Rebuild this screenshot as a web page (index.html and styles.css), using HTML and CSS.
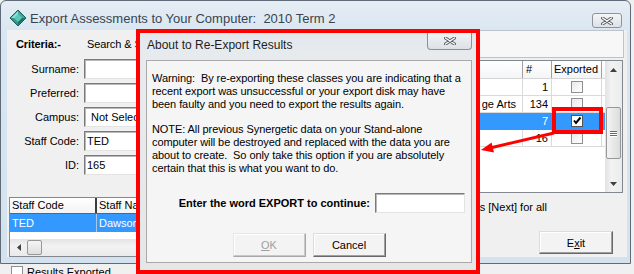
FILE: index.html
```html
<!DOCTYPE html>
<html>
<head>
<meta charset="utf-8">
<title>Export Assessments</title>
<link rel="stylesheet" href="styles.css">
</head>
<body>
<div class="desk">
  <div class="mainwin">
    <div class="titlebar">
      <svg class="appicon" width="16" height="16" viewBox="0 0 16 16">
        <polygon points="8,0 16,8 8,16 0,8" fill="#2b8e83" stroke="#1c5e57" stroke-width="1"/>
        <polygon points="8,1 8,8 1,8" fill="#8fe0d2"/>
        <polygon points="8,1 15,8 8,8" fill="#3fb0a0"/>
        <polygon points="1,8 8,8 8,15" fill="#2f9a8c"/>
        <polygon points="15,8 8,8 8,15" fill="#1d6f66"/>
        <polygon points="8,4 12,8 8,12 4,8" fill="#5cc8b7"/>
      </svg>
      <span class="wtitle">Export Assessments to Your Computer:&nbsp; 2010 Term 2</span>
      <div class="wclose">
        <svg width="12" height="8" viewBox="0 0 12 8"><path d="M1.5 1 L10.5 7 M10.5 1 L1.5 7" stroke="#5a5f66" stroke-width="3.2" stroke-linecap="round"/><path d="M1.5 1 L10.5 7 M10.5 1 L1.5 7" stroke="#ffffff" stroke-width="1.4" stroke-linecap="round"/></svg>
      </div>
    </div>
    <div class="client">
      <div class="leftcol">
        <div class="critrow"><b class="crit">Criteria:-</b><span>Search &amp; S</span></div>
        <div class="form">
          <label>Surname:</label><div class="tb"></div>
          <label>Preferred:</label><div class="tb"></div>
          <label>Campus:</label><div class="tb combo">Not Selec</div>
          <label>Staff Code:</label><div class="tb">TED</div>
          <label>ID:</label><div class="tb">165</div>
        </div>
        <div class="lgrid">
          <div class="lhead"><div class="lh c1">Staff Code</div><div class="lh c2">Staff Na</div></div>
          <div class="lrow sel"><div class="lc c1">TED</div><div class="lc c2">Dawson</div></div>
          <div class="lfill"></div>
          <div class="hscroll">
            <div class="harrow"><svg width="4" height="7" viewBox="0 0 4 7"><polygon points="4,0 0,3.5 4,7" fill="#404040"/></svg></div>
            <div class="hthumb"></div>
          </div>
        </div>
      </div>
      <div class="rightcol">
        <div class="toppanel"></div>
        <div class="rgrid">
          <div class="rtable">
            <div class="rrow rhead"><div></div><div></div><div>#</div><div>Exported</div><div></div></div>
            <div class="rrow"><div></div><div></div><div class="num">1</div><div class="chk"><span class="cbx"></span></div><div></div></div>
            <div class="rrow"><div></div><div class="desc">ge Arts</div><div class="num">134</div><div class="chk"><span class="cbx"></span></div><div></div></div>
            <div class="rrow sel"><div></div><div></div><div class="num">7</div><div class="chk"><span class="cbx on"><svg width="10" height="10" viewBox="0 0 10 10"><path d="M2 4.5 L4 7 L8.5 1.5" stroke="#000" stroke-width="2" fill="none"/></svg></span></div><div></div></div>
            <div class="rrow"><div></div><div></div><div class="num">16</div><div class="chk"><span class="cbx"></span></div><div></div></div>
          </div>
          <div class="vscroll">
            <div class="varrow"><svg width="7" height="4" viewBox="0 0 7 4"><polygon points="0,4 3.5,0 7,4" fill="#404040"/></svg></div>
            <div class="vtrack"><div class="vthumb"><span></span><span></span><span></span></div></div>
            <div class="varrow"><svg width="7" height="4" viewBox="0 0 7 4"><polygon points="0,0 3.5,4 7,0" fill="#404040"/></svg></div>
          </div>
        </div>
        <div class="hint">s [Next] for all</div>
        <div class="btnrow"><div class="btn exit">E<u>x</u>it</div></div>
      </div>
    </div>
  </div>
  <div class="belowrow"><span class="cb"></span>Results Exported</div>

  <div class="redframe">
    <div class="dialog">
      <div class="dtitlebar">
        <span class="dtitle">About to Re-Export Results</span>
        <div class="dclose">
          <svg width="12" height="8" viewBox="0 0 12 8"><path d="M1.5 1 L10.5 7 M10.5 1 L1.5 7" stroke="#5a5f66" stroke-width="3.2" stroke-linecap="round"/><path d="M1.5 1 L10.5 7 M10.5 1 L1.5 7" stroke="#ffffff" stroke-width="1.4" stroke-linecap="round"/></svg>
        </div>
      </div>
      <div class="panel">
        <p>Warning:&nbsp; By re-exporting these classes you are indicating that a<br>recent export was unsuccessful or your export disk may have<br>been faulty and you need to export the results again.</p>
        <p>NOTE: All previous Synergetic data on your Stand-alone<br>computer will be destroyed and replaced with the data you are<br>about to create.&nbsp; So only take this option if you are absolutely<br>certain that this is what you want to do.</p>
        <div class="enterrow"><b>Enter the word EXPORT to continue:</b><div class="tb wide"></div></div>
        <div class="dbtns"><div class="btn dis"><u>O</u>K</div><div class="btn">Cancel</div></div>
      </div>
    </div>
  </div>

  <svg class="annot" width="634" height="274" viewBox="0 0 634 274">
    <rect x="554" y="109" width="47" height="23" fill="none" stroke="#ff0000" stroke-width="4"/>
    <line x1="554" y1="133" x2="490" y2="148" stroke="#ff0000" stroke-width="3"/>
    <polygon points="481,150 491.6,142.5 494,152.5" fill="#ff0000"/>
  </svg>
</div>
</body>
</html>
```

FILE: styles.css
```css
* { box-sizing: border-box; }
html, body { margin: 0; padding: 0; }
body {
  width: 634px;
  height: 274px;
  overflow: hidden;
  background: #f0f0f0;
  font-family: "Liberation Sans", Arial, sans-serif;
  font-size: 11px;
  color: #000;
}
.desk { position: relative; width: 634px; height: 274px; }

/* main window */
.mainwin {
  width: 631px;
  height: 264px;
  border: 1px solid #5f6b78;
  border-radius: 6px 6px 0 0;
  background: linear-gradient(180deg, #e6edf4 0, #d9e6f1 30px, #d3e2ee 100%);
  padding: 0 3px 6px 6px;
  display: flex;
  flex-direction: column;
}
.titlebar { height: 29px; flex: none; display: flex; align-items: flex-start; }
.appicon { margin: 9px 0 0 3px; flex: none; }
.wtitle { margin: 10px 0 0 4px; font-size: 13px; line-height: 15px; color: #3a4450; white-space: nowrap; }
.wclose {
  margin: 12px 5px 0 auto;
  width: 30px; height: 15px;
  border: 1px solid #8d949c;
  border-radius: 3px;
  background: linear-gradient(180deg, #f3f5f7, #dde2e7);
  display: flex; align-items: center; justify-content: center;
}

.client { height: 227px; flex: none; background: #f0f0f0; display: flex; }
.leftcol { width: 283px; flex: none; padding-left: 2px; display: flex; flex-direction: column; }
.critrow { height: 28px; flex: none; display: flex; align-items: center; padding-left: 7px; white-space: nowrap; letter-spacing: -0.1px; }
.crit { width: 71px; flex: none; }

.form {
  margin-top: 1px;
  display: grid;
  grid-template-columns: 70px 200px;
  grid-auto-rows: 20px;
  column-gap: 5px;
  row-gap: 4px;
}
.form label { text-align: right; line-height: 20px; white-space: nowrap; }
.tb {
  height: 20px;
  background: #fff;
  border: 1px solid;
  border-color: #7a7a7a #e3e3e3 #e3e3e3 #7a7a7a;
  box-shadow: inset 1px 1px 0 #b8b8b8;
  padding-left: 2px;
  line-height: 18px;
  white-space: nowrap;
  overflow: hidden;
}
.tb.combo { padding-left: 6px; }

.lgrid {
  margin-top: 22px;
  width: 281px;
  height: 60px;
  border: 1px solid #828790;
  background: #fff;
  display: flex;
  flex-direction: column;
}
.lhead { height: 16px; flex: none; display: flex; border-bottom: 1px solid #646464; background: linear-gradient(#ffffff, #f3f3f3); }
.lh { line-height: 15px; padding-left: 2px; white-space: nowrap; }
.lh.c1 { width: 87px; border-right: 2px solid #3c3c3c; }
.lrow { height: 18px; flex: none; display: flex; }
.lrow.sel { background: #3399ff; color: #fff; }
.lc { line-height: 18px; padding-left: 2px; white-space: nowrap; }
.lc.c1 { width: 87px; border-right: 1px solid #a8c6e6; }
.lfill { flex: 1; }
.hscroll {
  height: 17px; flex: none;
  background: linear-gradient(180deg, #e3e3e3, #f2f2f2 40%, #eaeaea);
  display: flex; align-items: center;
}
.harrow { width: 17px; display: flex; justify-content: center; }
.hthumb {
  width: 15px; height: 15px;
  border: 1px solid #979797;
  border-radius: 2px;
  background: linear-gradient(180deg, #f5f5f5, #dedede);
}

.rightcol { flex: 1; padding-right: 3px; display: flex; flex-direction: column; }
.toppanel { height: 28px; flex: none; border: 1px solid #bcc3ca; border-left: none; background: #f7f7f7; }
.rgrid {
  margin: 2px 1px 0 0;
  height: 133px; flex: none;
  border: 1px solid #828790;
  background: #fff;
  display: flex;
}
.rtable { flex: 1; display: flex; flex-direction: column; overflow: hidden; }
.rrow {
  display: grid;
  grid-template-columns: 149px 83px 29px 50px 1fr;
  height: 17px; flex: none;
  border-bottom: 1px solid #dadada;
  line-height: 16px;
  white-space: nowrap;
}
.rrow > div { border-right: 1px solid #dadada; padding-left: 3px; overflow: hidden; }
.rrow > div:last-child { border-right: none; }
.rrow .desc { text-align: right; padding: 0 6px 0 0; }
.rhead { height: 18px; line-height: 17px; background: linear-gradient(#ffffff, #f4f5f7); border-bottom: 1px solid #d5d5d5; }
.rhead > div { border-right: 1px solid #a0a0a0; padding-left: 2px; }
.rhead > div:nth-child(3) { padding-left: 3px; }
.rrow .num { text-align: right; padding: 0 3px 0 0; }
.rrow .chk { display: flex; justify-content: center; align-items: center; padding: 0; }
.rrow.sel { background: #3399ff; color: #fff; border-bottom-color: #3399ff; }
.rrow.sel > div { border-right-color: #3399ff; }
.cbx {
  width: 12px; height: 12px;
  border: 1px solid #8e8f8f;
  background: linear-gradient(135deg, #e9e9e9, #ffffff);
  display: flex; align-items: center; justify-content: center;
}
.cbx.on { background: #fff; border-color: #555; }

.vscroll {
  width: 17px; flex: none;
  background: linear-gradient(90deg, #e2e2e2, #f3f3f3 40%, #ebebeb);
  display: flex; flex-direction: column;
}
.varrow { height: 17px; flex: none; display: flex; align-items: center; justify-content: center; }
.vtrack { flex: 1; padding: 29px 0 0 1px; }
.vthumb {
  width: 15px; height: 52px;
  border: 1px solid #979797;
  border-radius: 2px;
  background: linear-gradient(90deg, #f4f4f4, #dcdcdc);
  display: flex; flex-direction: column; justify-content: center; align-items: center; gap: 1px;
}
.vthumb span { width: 7px; height: 1px; background: #6a6a6a; box-shadow: 0 1px 0 #fff; }

.hint { height: 38px; flex: none; text-align: right; padding: 8px 77px 0 0; line-height: 13px; white-space: nowrap; overflow: hidden; }
.btnrow { display: flex; justify-content: flex-end; padding-right: 11px; }
.btn {
  width: 74px; height: 23px;
  border: 1px solid;
  border-color: #dcdcdc #696969 #696969 #dcdcdc;
  box-shadow: inset -1px -1px 0 #a0a0a0, inset 1px 1px 0 #ffffff;
  background: #f3f3f3;
  display: flex; align-items: center; justify-content: center;
}

.belowrow { display: flex; align-items: flex-start; padding: 2px 0 0 11px; line-height: 13px; white-space: nowrap; }
.belowrow .cb { width: 12px; height: 12px; border: 1px solid #8e8f8f; background: #fff; margin-right: 4px; flex: none; }

/* dialog */
.redframe {
  position: absolute;
  left: 136px; top: 29px;
  width: 344px; height: 245px;
  border: 4px solid #ff0000;
}
.dialog {
  height: 100%;
  background: linear-gradient(180deg, #e3e8ed 0, #e8ebee 27px, #e6e6e6 100%);
  padding: 0 4px 0 6px;
  display: flex; flex-direction: column;
}
.dtitlebar { height: 27px; flex: none; display: flex; align-items: flex-start; }
.dtitle { margin-top: 5px; padding-left: 1px; font-size: 12px; line-height: 15px; color: #1e1e1e; white-space: nowrap; }
.dclose {
  margin-left: auto;
  width: 45px; height: 17px;
  border: 1px solid #8b9198;
  border-top: none;
  border-radius: 0 0 4px 4px;
  background: linear-gradient(180deg, #f2f4f6, #dde1e5);
  display: flex; align-items: center; justify-content: center;
}
.panel {
  height: 203px; flex: none;
  border: 1px solid #a9a9a9;
  background: #f5f5f5;
  padding: 11px 5px 0 5px;
  display: flex; flex-direction: column;
}
.panel p { margin: 0; line-height: 13px; white-space: nowrap; letter-spacing: -0.08px; }
.panel p + p { margin-top: 12px; }
.enterrow { margin-top: 18px; height: 20px; display: flex; justify-content: flex-end; align-items: center; gap: 5px; padding-right: 1px; white-space: nowrap; }
.tb.wide { width: 90px; flex: none; }
.dbtns { margin-top: 20px; display: flex; justify-content: center; gap: 7px; }
.dbtns .btn { width: 73px; height: 24px; }
.btn.dis { color: #a0a0a0; border-color: #e6e6e6 #a8a8a8 #a8a8a8 #e6e6e6; box-shadow: inset -1px -1px 0 #c8c8c8, inset 1px 1px 0 #ffffff; }

.annot { position: absolute; left: 0; top: 0; pointer-events: none; }
```
